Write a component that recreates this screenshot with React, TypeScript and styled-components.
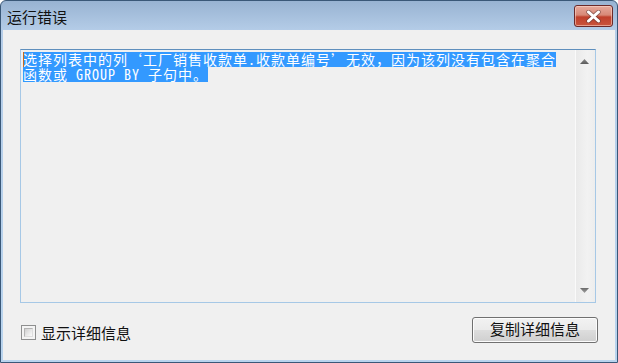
import React from "react";
import styled, { createGlobalStyle } from "styled-components";

const Global = createGlobalStyle`
  html, body { margin: 0; padding: 0; background: #ffffff; }
  #root { width: 618px; height: 363px; }
`;

const UI_FONT = `"Noto Sans CJK SC", "Noto Sans", sans-serif`;
const EDIT_FONT = `"Noto Sans Mono CJK SC", "Noto Sans CJK SC", monospace`;

const Window = styled.div`
  box-sizing: border-box;
  width: 618px;
  height: 363px;
  display: flex;
  flex-direction: column;
  border: 1px solid #3a5878;
  border-radius: 6px 6px 0 0;
  background: linear-gradient(180deg, #98b3d2 0px, #b5cde8 30px, #b9d4ee 100%);
  overflow: hidden;
`;

const TitleBar = styled.div`
  height: 29px;
  flex: none;
  display: flex;
  align-items: flex-start;
  justify-content: space-between;
  padding: 0 4px 0 6px;
`;

const Title = styled.span`
  font-family: ${UI_FONT};
  font-size: 15px;
  line-height: 15px;
  margin-top: 8px;
  color: #111;
`;

const CloseButton = styled.div`
  box-sizing: border-box;
  margin-top: 4px;
  width: 39px;
  height: 22px;
  border: 1px solid #6b2a2a;
  border-radius: 3px;
  background: linear-gradient(180deg, #e6a99c 0%, #d88977 45%, #c0402c 55%, #c9553d 100%);
  box-shadow: inset 0 0 0 1px rgba(255, 220, 210, 0.55);
  display: flex;
  align-items: center;
  justify-content: center;
`;

const Body = styled.div`
  flex: 1;
  margin: 0 2px 2px 2px;
  background: #f0f0f0;
  padding: 19px 19px 0 17px;
  display: flex;
  flex-direction: column;
`;

const EditBox = styled.div`
  box-sizing: border-box;
  height: 254px;
  display: flex;
  border: 1px solid #a6c8e6;
  border-top-color: #5f8fbd;
  background: #f0f0f0;
`;

const EditText = styled.div`
  flex: 1;
  padding: 2px 0 0 2px;
  position: relative;
`;

const Line = styled.div`
  height: 15px;
  display: flex;
`;

const Selected = styled.span`
  display: block;
  height: 15px;
  line-height: 15px;
  font-family: ${EDIT_FONT};
  font-size: 14px;
  letter-spacing: 1px;
  color: #ffffff;
  background: #3399ff;
  white-space: pre;
`;

const Caret = styled.span`
  position: absolute;
  left: 2px;
  top: 2px;
  width: 1px;
  height: 15px;
  background: #c86a20;
`;

const ScrollBar = styled.div`
  width: 20px;
  flex: none;
  border-left: 1px solid #fafafa;
  background: linear-gradient(90deg, #eaeaea 0%, #f2f2f2 60%, #ededed 100%);
  display: flex;
  flex-direction: column;
  justify-content: space-between;
  padding: 9px 0 9px 4px;
  box-sizing: border-box;
`;

const Arrow = styled.svg`
  display: block;
`;

const BottomRow = styled.div`
  margin-top: 14px;
  margin-right: -2px;
  display: flex;
  align-items: center;
  justify-content: space-between;
  padding-left: 1px;
`;

const CheckLabel = styled.label`
  display: flex;
  align-items: center;
  gap: 5px;
  margin-top: 5px;
  font-family: ${UI_FONT};
  font-size: 15px;
  line-height: 16px;
  color: #111;
`;

const CheckBox = styled.span`
  box-sizing: border-box;
  width: 15px;
  height: 15px;
  border: 1px solid #8e8f8f;
  background: #f4f4f4;
  box-shadow: inset 0 0 0 1px #f4f4f4;
  position: relative;
  &::after {
    content: "";
    position: absolute;
    left: 2px;
    top: 2px;
    right: 2px;
    bottom: 2px;
    border: 1px solid #b4b4b4;
    border-right-color: #dedede;
    border-bottom-color: #dedede;
    background: linear-gradient(135deg, #cfcfcf 0%, #e6e6e6 50%, #fbfbfb 100%);
    box-sizing: border-box;
  }
`;

const Button = styled.div`
  box-sizing: border-box;
  width: 126px;
  height: 26px;
  border: 1px solid #707070;
  border-radius: 3px;
  background: linear-gradient(180deg, #f2f2f2 0%, #ebebeb 48%, #dddddd 52%, #cfcfcf 100%);
  box-shadow: inset 0 0 0 1px #fcfcfc;
  display: flex;
  align-items: center;
  justify-content: center;
  font-family: ${UI_FONT};
  font-size: 15px;
  line-height: 16px;
  color: #111;
  padding-bottom: 2px;
`;

function UpArrow() {
  return (
    <Arrow width="9" height="5" viewBox="0 0 9 5">
      <defs>
        <linearGradient id="ua" x1="0" y1="0" x2="0" y2="1">
          <stop offset="0" stopColor="#8a8a8a" />
          <stop offset="1" stopColor="#5a5a5a" />
        </linearGradient>
      </defs>
      <polygon points="4.5,0 9,5 0,5" fill="url(#ua)" />
    </Arrow>
  );
}

function DownArrow() {
  return (
    <Arrow width="9" height="5" viewBox="0 0 9 5">
      <defs>
        <linearGradient id="da" x1="0" y1="0" x2="0" y2="1">
          <stop offset="0" stopColor="#6a6a6a" />
          <stop offset="1" stopColor="#a0a0a0" />
        </linearGradient>
      </defs>
      <polygon points="0,0 9,0 4.5,5" fill="url(#da)" />
    </Arrow>
  );
}

function CloseGlyph() {
  return (
    <svg width="15" height="13" viewBox="0 0 15 13">
      <path
        d="M2.5 2 L12.5 11 M12.5 2 L2.5 11"
        stroke="#5a3a3a"
        strokeWidth="4.6"
        strokeLinecap="round"
        opacity="0.55"
      />
      <path
        d="M2.5 2 L12.5 11 M12.5 2 L2.5 11"
        stroke="#ffffff"
        strokeWidth="3"
        strokeLinecap="round"
      />
    </svg>
  );
}

export default function App() {
  return (
    <>
      <Global />
      <Window>
        <TitleBar>
          <Title>运行错误</Title>
          <CloseButton>
            <CloseGlyph />
          </CloseButton>
        </TitleBar>
        <Body>
          <EditBox>
            <EditText>
              <Line>
                <Selected>选择列表中的列‘工厂销售收款单.收款单编号’无效，因为该列没有包含在聚合</Selected>
              </Line>
              <Line>
                <Selected>函数或 GROUP BY 子句中。</Selected>
              </Line>
              <Caret />
            </EditText>
            <ScrollBar>
              <UpArrow />
              <DownArrow />
            </ScrollBar>
          </EditBox>
          <BottomRow>
            <CheckLabel>
              <CheckBox />
              显示详细信息
            </CheckLabel>
            <Button>复制详细信息</Button>
          </BottomRow>
        </Body>
      </Window>
    </>
  );
}
